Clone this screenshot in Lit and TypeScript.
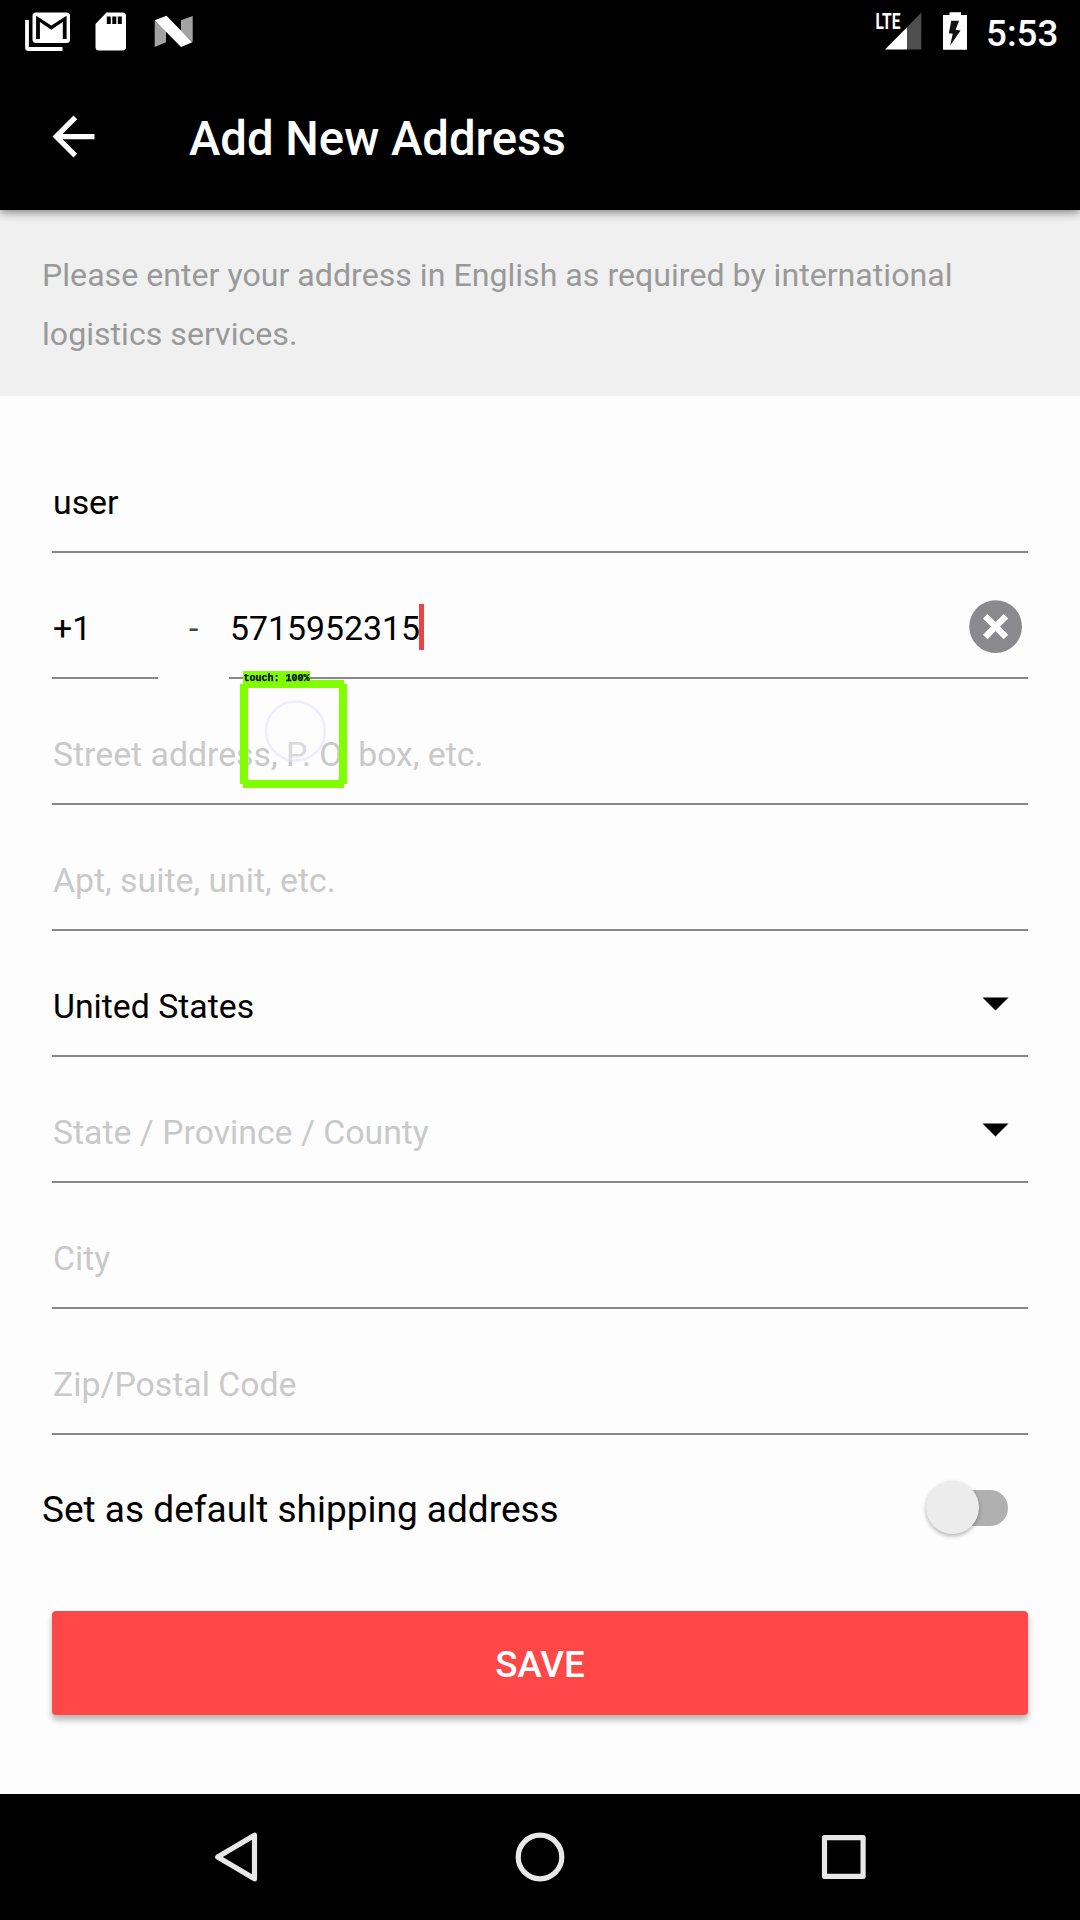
import { LitElement, html, svg, css, nothing } from "lit";
import { customElement, property, state } from "lit/decorators.js";
import { classMap } from "lit/directives/class-map.js";

@customElement("status-bar")
class StatusBar extends LitElement {
  static styles = css`
    :host {
      display: flex;
      box-sizing: border-box;
      height: 63px;
      padding: 10px 22px 0 24px;
      background: #000;
      color: #fff;
      justify-content: space-between;
    }
    .group {
      display: flex;
      align-items: flex-start;
    }
    .notes {
      gap: 22px;
    }
    .lte {
      font: 700 21.5px Roboto, sans-serif;
      fill: #fff;
    }
    .battery {
      margin-left: 17px;
    }
    .clock {
      margin-left: 17px;
      font: 500 36.75px/43px Roboto, sans-serif;
      width: 72px;
      white-space: nowrap;
      padding-top: 2px;
    }
    svg {
      display: block;
    }
  `;

  render() {
    return html`
      <div class="group notes">
        <svg width="48" height="42" viewBox="24 10 48 42">
          <path d="M27 20V47.5a1.5 1.5 0 0 0 1.5 1.5H62.5" fill="none" stroke="#fff" stroke-width="3.8" />
          <rect x="32.5" y="12.5" width="37.5" height="30.5" rx="3.5" fill="#fff" />
          <path d="M36.1 39V15.8L51.3 25.6L66.6 15.8V39H62.8V22L51.3 29.8L39.9 22V39Z" fill="#000" />
        </svg>
        <svg width="38" height="42" viewBox="94 10 38 42">
          <path d="M106.5 12.5H122.5a3.5 3.5 0 0 1 3.5 3.5V47a3.5 3.5 0 0 1-3.5 3.5H99a3.5 3.5 0 0 1-3.5-3.5V24Z" fill="#fff" />
          <path d="M106.8 16.5h4v7.5h-4zM112.3 16.5h4v7.5h-4zM117.8 16.5h4v7.5h-4z" fill="#000" />
        </svg>
        <svg width="42" height="42" viewBox="154 10 42 42">
          <path d="M154.7 20.5L166 31V42.3L154.7 47ZM181 20.3L192.7 16V42L181 31Z" fill="#a3a3a3" />
          <path d="M154.7 20.3L166.5 15.8L192.3 42.3L181 47Z" fill="#fff" />
        </svg>
      </div>
      <div class="group">
        <svg width="50" height="42" viewBox="874 10 50 42">
          <path d="M885 49.5L907 27.2V49.5Z" fill="#fff" />
          <path d="M907 27.2L921.3 12.5V49.5H907Z" fill="#4e4e4e" />
          <text class="lte" x="875.4" y="29" textLength="25" lengthAdjust="spacingAndGlyphs">LTE</text>
        </svg>
        <svg class="battery" width="28" height="42" viewBox="941 10 28 42">
          <path d="M949.5 12.3H961V15H967V49.7H943V15H949.5Z" fill="#fff" />
          <path d="M951.3 20.8H959L955.6 29.7L960.6 30.4L950 45.7L952.8 33.8L948.8 33.2Z" fill="#111" />
        </svg>
        <div class="clock">5:53</div>
      </div>
    `;
  }
}

@customElement("title-bar")
class TitleBar extends LitElement {
  static styles = css`
    :host {
      display: flex;
      position: relative;
      height: 147px;
      box-sizing: border-box;
      padding-left: 42px;
      align-items: center;
      gap: 84px;
      background: #000;
      color: #fff;
      box-shadow: 0 2px 9px rgba(0, 0, 0, 0.5);
    }
    .title {
      font: 500 47.25px/56px Roboto, sans-serif;
      padding-top: 6px;
      white-space: nowrap;
    }
  `;

  render() {
    return html`
      <svg width="63" height="63" viewBox="0 0 24 24">
        <path d="M20 11H7.83l5.59-5.59L12 4l-8 8 8 8 1.41-1.41L7.83 13H20z" fill="#fff" />
      </svg>
      <div class="title">Add New Address</div>
    `;
  }
}

@customElement("form-field")
class FormField extends LitElement {
  @property() value = "";
  @property() hint = "";
  @property() action: "" | "menu" | "clear" = "";
  @property({ type: Boolean }) caret = false;

  static styles = css`
    :host {
      display: flex;
      box-sizing: border-box;
      height: 126px;
      padding: 26px 0 0;
      border-bottom: 2px solid #888;
      align-items: center;
      font: 400 33.8px/46px Roboto, sans-serif;
      color: #000;
    }
    .text {
      padding: 2px 0 0 1px;
      white-space: nowrap;
    }
    .hint {
      color: #c9c9c9;
    }
    .caret {
      width: 5px;
      height: 46px;
      margin: -1px 0 0 -1px;
      background: #e84545;
    }
    .fill {
      flex: 1;
    }
    .menu {
      margin: -4px 19px 0 0;
    }
    .clear {
      margin: -2px 5px 0 0;
    }
  `;

  render() {
    return html`
      <div class=${classMap({ text: true, hint: !this.value })}>${this.value || this.hint}</div>
      ${this.caret ? html`<div class="caret"></div>` : nothing}
      <div class="fill"></div>
      ${this.action === "menu"
        ? html`<svg class="menu" width="27" height="14" viewBox="0 0 27 14">
            <path d="M.5 .5H26.5L13.5 13.5Z" fill="#000" />
          </svg>`
        : nothing}
      ${this.action === "clear"
        ? html`<svg class="clear" width="54" height="54" viewBox="0 0 54 54">
            <circle cx="26.6" cy="26.6" r="26.4" fill="#8a898e" />
            <path d="M16.2 16.2L37 37M37 16.2L16.2 37" stroke="#fff" stroke-width="6.4" />
          </svg>`
        : nothing}
    `;
  }
}

@customElement("nav-bar")
class NavBar extends LitElement {
  static styles = css`
    :host {
      display: flex;
      height: 126px;
      background: #000;
      justify-content: center;
      align-items: center;
      gap: 240px;
    }
    .shape {
      fill: none;
      stroke: #e8e8e8;
      stroke-width: 5.2;
      stroke-linejoin: round;
    }
  `;

  private key(shape: unknown) {
    return html`<svg width="64" height="64" viewBox="-32 -32 64 64">${shape}</svg>`;
  }

  render() {
    return html`
      ${this.key(svg`<path class="shape" d="M18.5 -21.8V21.8L-18.3 0Z" />`)}
      ${this.key(svg`<circle class="shape" r="21.8" />`)}
      ${this.key(svg`<rect class="shape" x="-19.5" y="-19.3" width="38.6" height="38.6" />`)}
    `;
  }
}

@customElement("app-root")
class AppRoot extends LitElement {
  @state() private phone = "5715952315";

  static styles = css`
    :host {
      display: flex;
      flex-direction: column;
      position: relative;
      width: 1080px;
      height: 1920px;
      overflow: hidden;
      background: #fdfdfd;
      font-family: Roboto, sans-serif;
    }
    .notice {
      box-sizing: border-box;
      height: 186px;
      padding: 36px 42px 0;
      background: #f0f0f0;
      color: #999;
      font-size: 32.15px;
      line-height: 59px;
    }
    .form {
      padding: 31px 52px 0;
    }
    .phone {
      display: flex;
    }
    .code {
      width: 106px;
    }
    .dash {
      width: 71px;
      box-sizing: border-box;
      padding: 53px 0 0 31px;
      font-size: 33.75px;
      line-height: 46px;
      color: #444;
    }
    .number {
      flex: 1;
    }
    .default {
      display: flex;
      height: 147px;
      padding: 0 72px 0 42px;
      align-items: center;
      justify-content: space-between;
      font-size: 37px;
      line-height: 44px;
      color: #000;
    }
    .label {
      padding-top: 4px;
    }
    .track {
      display: flex;
      align-items: center;
      width: 78px;
      height: 36px;
      border-radius: 18px;
      background: linear-gradient(#b0b0b0, #b0b0b0) right / 60px 36px no-repeat;
    }
    .thumb {
      width: 53px;
      height: 53px;
      flex: none;
      margin-left: -4px;
      border-radius: 50%;
      background: #ececec;
      box-shadow: 0 2px 4px rgba(0, 0, 0, 0.3);
    }
    .save {
      display: flex;
      height: 104px;
      margin: 30px 52px 79px;
      padding-top: 2px;
      box-sizing: border-box;
      align-items: center;
      justify-content: center;
      border-radius: 4px;
      background: #ff4747;
      box-shadow: 0 5px 6px rgba(0, 0, 0, 0.28);
      color: #fff;
      font-size: 36.75px;
      font-weight: 500;
    }
    .overlay {
      position: absolute;
      left: 238px;
      top: 669px;
    }
    .tag {
      font: 700 10px "Liberation Mono", monospace;
      fill: #000;
      stroke: #000;
      stroke-width: 0.25;
    }
  `;

  render() {
    return html`
      <status-bar></status-bar>
      <title-bar></title-bar>
      <div class="notice">
        Please enter your address in English as required by international logistics services.
      </div>
      <div class="form">
        <form-field value="user"></form-field>
        <div class="phone">
          <form-field class="code" value="+1"></form-field>
          <div class="dash">-</div>
          <form-field class="number" .value=${this.phone} caret action="clear"></form-field>
        </div>
        <form-field hint="Street address, P. O. box, etc."></form-field>
        <form-field hint="Apt, suite, unit, etc."></form-field>
        <form-field value="United States" action="menu"></form-field>
        <form-field hint="State / Province / County" action="menu"></form-field>
        <form-field hint="City"></form-field>
        <form-field hint="Zip/Postal Code"></form-field>
      </div>
      <div class="default">
        <div class="label">Set as default shipping address</div>
        <div class="track"><div class="thumb"></div></div>
      </div>
      <div class="save">SAVE</div>
      <nav-bar></nav-bar>
      <svg class="overlay" width="112" height="121" viewBox="238 669 112 121">
        <circle cx="295.5" cy="731" r="29.5" fill="#f8f8fd" fill-opacity=".35" stroke="#e4e4fa" stroke-opacity=".6" stroke-width="2.5" />
        <path d="M243 671H310V680H344V684H347V784H344V788H243V784H240V684H243ZM248 688V780H339V688Z" fill="#80ff00" fill-rule="evenodd" />
        <text class="tag" x="243.6" y="681">touch: 100%</text>
      </svg>
    `;
  }
}
